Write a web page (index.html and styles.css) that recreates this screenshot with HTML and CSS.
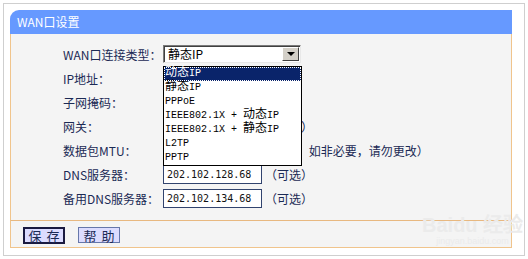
FILE: index.html
```html
<!DOCTYPE html>
<html lang="zh-CN">
<head>
<meta charset="UTF-8">
<title>WAN口设置</title>
<link rel="stylesheet" href="styles.css">
</head>
<body>
<div class="frame">
  <div class="panel">
    <div class="title">WAN口设置</div>
    <div class="body">
      <div class="row">
        <span class="label">WAN口连接类型：</span>
        <div class="select"><span class="sel-text">静态IP</span><span class="sel-btn"><i></i></span></div>
      </div>
      <div class="row">
        <span class="label">IP地址：</span>
        <span class="input"></span>
      </div>
      <div class="row">
        <span class="label">子网掩码：</span>
        <span class="input"></span>
      </div>
      <div class="row">
        <span class="label">网关：</span>
        <span class="input"></span>
        <span class="note"><span class="hid">（可选</span>）</span>
      </div>
      <div class="row">
        <span class="label">数据包MTU：</span>
        <span class="input short"></span>
        <span class="note"><span class="hid">（默认是1500，</span>如非必要，请勿更改）</span>
      </div>
      <div class="row">
        <span class="label">DNS服务器：</span>
        <span class="input">202.102.128.68</span>
        <span class="note">（可选）</span>
      </div>
      <div class="row">
        <span class="label">备用DNS服务器：</span>
        <span class="input">202.102.134.68</span>
        <span class="note">（可选）</span>
      </div>
    </div>
    <div class="foot">
      <button class="btn default">保 存</button>
      <button class="btn">帮 助</button>
    </div>
  </div>
</div>

<!-- opened dropdown of the connection type -->
<ul class="list">
  <li class="on"><span class="cn">动态</span>IP</li>
  <li><span class="cn">静态</span>IP</li>
  <li>PPPoE</li>
  <li>IEEE802.1X + <span class="cn">动态</span>IP</li>
  <li>IEEE802.1X + <span class="cn">静态</span>IP</li>
  <li>L2TP</li>
  <li>PPTP</li>
</ul>

<div class="mark"><b>Bai<span>du</span> 经验</b><small>jingyan.baidu.com</small></div>
</body>
</html>
```

FILE: styles.css
```css
body{margin:0;background:#fff;font-family:"Noto Sans CJK SC","DejaVu Sans",sans-serif;font-size:12px;color:#1b2a55;}
.frame{margin:3px 0 0 3px;width:505px;height:238px;border:1px solid #cfcfcf;padding:6px 9px 7px 6px;}
.panel{width:502px;}
.title{height:24px;line-height:24px;background:#6699ff;color:#fff;padding-left:7px;border-top-left-radius:9px;font-size:12px;}
.body{background:#f4f4f4;border-left:1px solid #f0c48c;border-right:1px solid #f0c48c;padding:8px 0 10px 52px;}
.row{display:flex;align-items:center;height:24px;}
.label{width:100px;white-space:nowrap;}
.input{box-sizing:border-box;width:99px;height:19px;line-height:17px;border:1px solid #31436e;background:#fff;padding-left:3px;font-family:"DejaVu Sans Mono",monospace;font-size:10px;color:#111;}
.input.short{width:56px;}
.note{margin-left:3px;white-space:nowrap;}
.hid{visibility:hidden;}
/* select box */
.select{box-sizing:border-box;width:138px;height:18px;display:flex;border:1px solid;border-color:#7a7a7a #e8e8e8 #e8e8e8 #7a7a7a;background:#fff;box-shadow:inset 1px 1px 0 #404040;}
.sel-text{flex:1;padding-left:4px;line-height:16px;color:#000;}
.sel-btn{width:15px;margin:1px;background:#d4d0c8;border:1px solid;border-color:#fff #404040 #404040 #fff;display:flex;align-items:center;justify-content:center;}
.sel-btn i{width:0;height:0;border-left:4px solid transparent;border-right:4px solid transparent;border-top:4px solid #000;}
/* footer */
.foot{height:20px;background:#f4f4f4;border:1px solid #f0c48c;border-top:1px solid #e8b880;padding:6px 0 0 12px;display:flex;align-items:flex-start;gap:13px;}
.btn{box-sizing:border-box;width:42px;height:16px;padding:0;background:#dcdcff;border:1px solid #6677aa;font-family:"Noto Sans CJK SC",sans-serif;font-size:13px;line-height:13px;color:#1b2a55;word-spacing:2px;}
.btn.default{height:17px;border:2px solid #1a1a40;}
/* dropdown */
.list{position:absolute;left:163px;top:66px;width:137px;margin:0;padding:0;list-style:none;background:#fff;border:1px solid #000;font-family:"Liberation Mono","Noto Sans CJK SC",monospace;font-size:10px;color:#000;}
.list li{height:14px;line-height:14px;padding-left:1px;white-space:nowrap;}
.list .cn{font-family:"Noto Sans CJK SC",sans-serif;font-size:12px;line-height:1px;}
.list li.on{background:#0a246a;color:#fff;outline:1px dotted #fff;outline-offset:-1px;}
/* watermark */
.mark{position:absolute;left:422px;top:214px;color:#ebebeb;text-align:center;font-family:"Liberation Sans",sans-serif;}
.mark b{display:block;font-size:20px;line-height:22px;}
.mark small{display:block;font-size:9px;}
```
